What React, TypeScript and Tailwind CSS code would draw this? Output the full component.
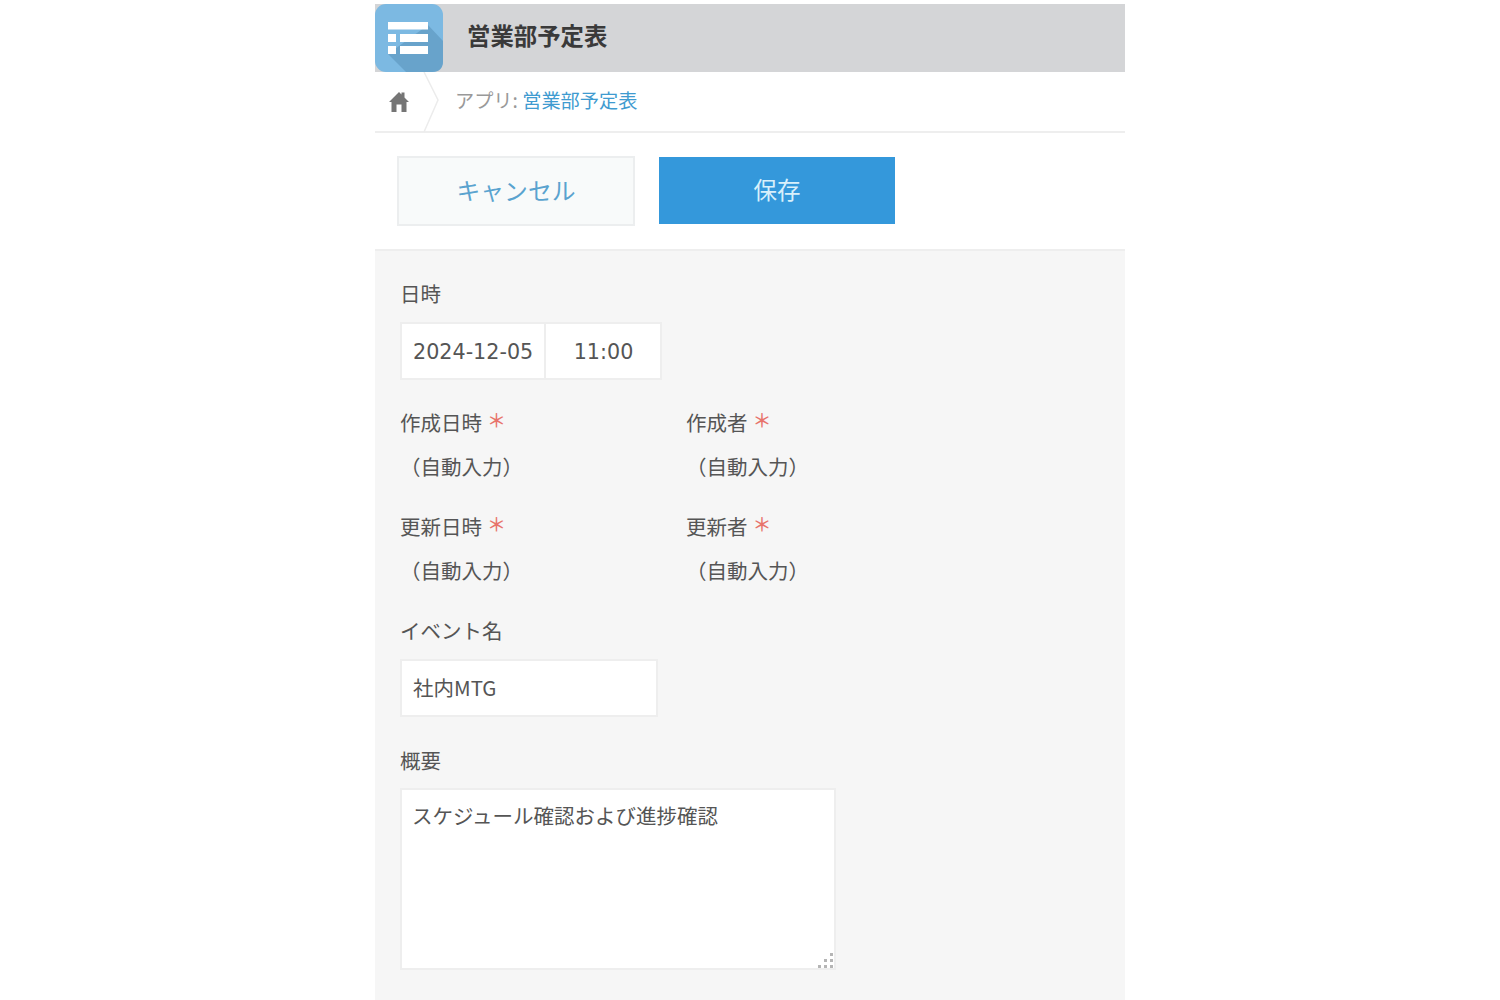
const jp = "font-['Noto_Sans_CJK_JP','Liberation_Sans',sans-serif]"

function AppIcon() {
  return (
    <svg width="68" height="68" viewBox="0 0 68 68" className="shrink-0">
      <rect width="68" height="68" rx="11" fill="#7cb9e2" />
      <path d="M13 50 L31 68 L57 68 Q68 68 68 57 L68 37 L53 21 Z" fill="#68a3cb" />
      <rect x="13" y="18" width="40" height="7.5" fill="#fff" />
      <rect x="13" y="30" width="8" height="8" fill="#fff" />
      <rect x="25" y="30" width="28" height="8" fill="#fff" />
      <rect x="13" y="42" width="8" height="8" fill="#fff" />
      <rect x="25" y="42" width="28" height="8" fill="#fff" />
    </svg>
  )
}

function HomeIcon() {
  return (
    <svg width="20" height="21" viewBox="0 0 20 21">
      <path d="M10 1 L12.5 3.4 L12.5 1.5 L15.5 1.5 L15.5 6.4 L20 11 L17.5 11 L17.5 21 L12.5 21 L12.5 13.5 L7.5 13.5 L7.5 21 L2.5 21 L2.5 11 L0 11 Z" fill="#757575" />
    </svg>
  )
}

function AutoField({ label }: { label: string }) {
  return (
    <div className="w-[286px]">
      <div className="flex h-[28px] items-center text-[20.5px] text-[#555]">
        {label}
        <span className="ml-[5px] -translate-y-[3px] text-[19px] leading-none font-medium text-[#e8736b]">＊</span>
      </div>
      <div className="mt-[16px] h-[28px] text-[20.5px] leading-[28px] text-[#555]">（自動入力）</div>
    </div>
  )
}

export default function App() {
  return (
    <div className={`min-h-[1000px] bg-white ${jp}`}>
      <div className="mx-auto flex h-[1000px] w-[750px] flex-col overflow-hidden pt-[4px]">
        <div className="flex h-[68px] shrink-0 items-start bg-[#d4d5d7]">
          <AppIcon />
          <div className="ml-[24px] mt-[14px] text-[23.4px] leading-[34px] font-bold text-[#3a3a3a]">営業部予定表</div>
        </div>

        <div className="flex h-[61px] shrink-0 items-center border-b-2 border-[#eeeeee]">
          <div className="relative flex h-full w-[47px] shrink-0 items-center justify-center">
            <HomeIcon />
            <svg width="20" height="60" viewBox="0 0 20 60" className="absolute left-[47px] top-0">
              <path d="M2 0 L16 28 L2 60" fill="none" stroke="#ececec" strokeWidth="1.5" />
            </svg>
          </div>
          <div className="ml-[33px] -translate-y-[1px] text-[19.2px] text-[#999]">
            アプリ: <span className="text-[#3f9bd0]">営業部予定表</span>
          </div>
        </div>

        <div className="flex h-[118px] shrink-0 items-start gap-[24px] border-b-2 border-[#eeeeee] pl-[22px] pt-[23px]">
          <button className="flex h-[70px] w-[238px] items-center justify-center border-2 border-[#eceeef] bg-[#f8fafa] pb-[2px] text-[23.8px] text-[#5aa3cf]">
            キャンセル
          </button>
          <button className="mt-[1px] flex h-[67px] w-[236px] items-center justify-center bg-[#3498db] pb-[2px] text-[23.5px] text-[#d8f0fb]">
            保存
          </button>
        </div>

        <div className="flex-1 bg-[#f6f6f6] pl-[25px] pt-[27px]">
          <div className="h-[30px] text-[20.5px] leading-[30px] text-[#555]">日時</div>
          <div className="mt-[14px] flex">
            <div className="flex h-[58px] w-[146px] items-center border-2 border-[#eeeeee] bg-white pl-[11px] pt-[4px] font-['DejaVu_Sans',sans-serif] text-[20.7px] text-[#555]">
              2024-12-05
            </div>
            <div className="flex h-[58px] w-[116px] items-center justify-center border-2 border-l-0 border-[#eeeeee] bg-white pl-[1px] pt-[4px] font-['DejaVu_Sans',sans-serif] text-[20.7px] text-[#555]">
              11:00
            </div>
          </div>

          <div className="mt-[28px] flex">
            <AutoField label="作成日時" />
            <AutoField label="作成者" />
          </div>
          <div className="mt-[32px] flex">
            <AutoField label="更新日時" />
            <AutoField label="更新者" />
          </div>

          <div className="mt-[31px] h-[30px] text-[20.5px] leading-[30px] text-[#555]">イベント名</div>
          <div className="mt-[14px] flex h-[58px] w-[258px] items-center border-2 border-[#eeeeee] bg-white pb-[2px] pl-[11px] text-[20.5px] text-[#555]">
            社内MTG
          </div>

          <div className="mt-[28px] h-[30px] text-[20.5px] leading-[30px] text-[#555]">概要</div>
          <div className="relative mt-[13px] h-[182px] w-[436px] border-2 border-[#eeeeee] bg-white pl-[10px] pt-[10px] text-[20.5px] leading-[30px] text-[#555]">
            スケジュール確認および進捗確認
            <svg width="16" height="16" viewBox="0 0 16 16" className="absolute bottom-0 right-0">
              <g fill="#b5b5b5">
                <rect x="12" y="1" width="3" height="3" />
                <rect x="6" y="7" width="3" height="3" />
                <rect x="12" y="7" width="3" height="3" />
                <rect x="0" y="13" width="3" height="3" />
                <rect x="6" y="13" width="3" height="3" />
                <rect x="12" y="13" width="3" height="3" />
              </g>
            </svg>
          </div>
        </div>
      </div>
    </div>
  )
}
